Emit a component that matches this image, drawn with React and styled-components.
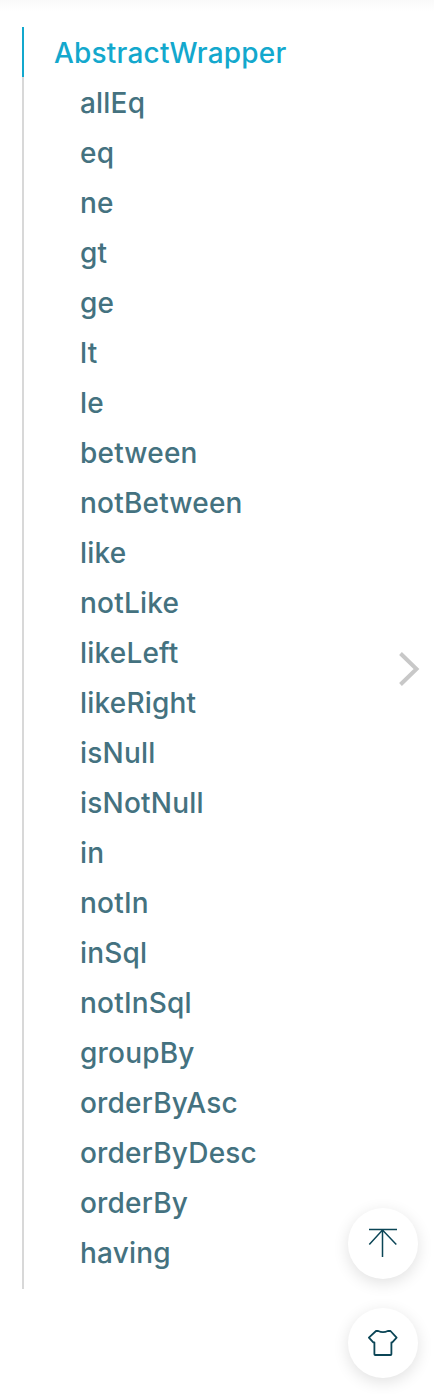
import React, { useState } from "react";
import styled, { createGlobalStyle } from "styled-components";

const GlobalStyle = createGlobalStyle`
  body {
    margin: 0;
    background-color: #ffffff;
  }
`;

const PageCompo = styled.div`
  position: relative;
  box-sizing: border-box;
  height: 1394px;
  padding: 27px 0 0 22px;
  overflow: hidden;
  background: linear-gradient(#f9f9f9, #ffffff 11px);
  font-family: Inter, "Liberation Sans", sans-serif;
`;

const AnchorList = styled.ul`
  display: flex;
  flex-direction: column;
  margin: 0;
  padding: 0;
  list-style: none;
`;

const AnchorItem = styled.li`
  box-sizing: border-box;
  height: ${({ $last }) => ($last ? "62px" : "50px")};
  padding-left: ${({ $level }) => ($level === 1 ? "30px" : "56px")};
  border-left: 2px solid ${({ $active }) => ($active ? "#13a8cd" : "#d8d8d8")};
`;

const AnchorLink = styled.a`
  font-size: 28px;
  font-weight: 500;
  line-height: 52px;
  letter-spacing: 0.2px;
  white-space: nowrap;
  color: ${({ $active }) => ($active ? "#13a8cd" : "#447280")};
  cursor: pointer;
`;

const NextButton = styled.button`
  position: absolute;
  top: 649px;
  right: 12px;
  display: flex;
  padding: 0;
  border: 0;
  background: none;
  cursor: pointer;
`;

const ToolButtons = styled.div`
  position: absolute;
  right: 16px;
  bottom: 16px;
  display: flex;
  flex-direction: column;
  gap: 29px;
`;

const RoundButton = styled.button`
  display: flex;
  align-items: center;
  justify-content: center;
  width: 70px;
  height: 70.5px;
  padding: 0;
  border: 0;
  border-radius: 50%;
  background-color: #ffffff;
  box-shadow: 0 4px 16px rgba(0, 0, 0, 0.12);
  color: #0b4556;
  cursor: pointer;
`;

const ROOT = "AbstractWrapper";

const METHODS = [
  "allEq",
  "eq",
  "ne",
  "gt",
  "ge",
  "lt",
  "le",
  "between",
  "notBetween",
  "like",
  "notLike",
  "likeLeft",
  "likeRight",
  "isNull",
  "isNotNull",
  "in",
  "notIn",
  "inSql",
  "notInSql",
  "groupBy",
  "orderByAsc",
  "orderByDesc",
  "orderBy",
  "having",
];

const ChevronIcon = () => (
  <svg width="24" height="40" viewBox="0 0 24 40" fill="none">
    <path d="M2.5 4.5L18.5 20L2.5 35.5" stroke="#c8c8c8" strokeWidth="4" />
  </svg>
);

const TopIcon = () => (
  <svg width="30" height="30" viewBox="0 0 30 30" fill="none" stroke="currentColor">
    <path d="M1 1.5H29M14.5 1.5V29M1.3 16.5L14.5 2L28.3 16.5" strokeWidth="1.5" />
  </svg>
);

const ShirtIcon = () => (
  <svg width="30" height="28" viewBox="0 0 30 28" fill="none" stroke="currentColor">
    <path
      d="M8 2H10.2Q15 4.2 19.8 2H22.5L28.6 8.6L24.3 13.4H23.4V25.2Q23.4 26 22.6 26H7.2Q6.4 26 6.4 25.2V13.4H5.3L0.9 8.6Z"
      strokeWidth="1.8"
      strokeLinejoin="round"
    />
  </svg>
);

const App = () => {
  const [active, setActive] = useState(ROOT);

  return (
    <PageCompo>
      <GlobalStyle />
      <AnchorList>
        <AnchorItem $level={1} $active={active === ROOT}>
          <AnchorLink $active={active === ROOT} onClick={() => setActive(ROOT)}>
            {ROOT}
          </AnchorLink>
        </AnchorItem>
        {METHODS.map((name, index) => (
          <AnchorItem
            key={name}
            $level={2}
            $active={active === name}
            $last={index === METHODS.length - 1}
          >
            <AnchorLink
              $active={active === name}
              onClick={() => setActive(name)}
            >
              {name}
            </AnchorLink>
          </AnchorItem>
        ))}
      </AnchorList>
      <NextButton type="button">
        <ChevronIcon />
      </NextButton>
      <ToolButtons>
        <RoundButton type="button">
          <TopIcon />
        </RoundButton>
        <RoundButton type="button">
          <ShirtIcon />
        </RoundButton>
      </ToolButtons>
    </PageCompo>
  );
};

export default App;
